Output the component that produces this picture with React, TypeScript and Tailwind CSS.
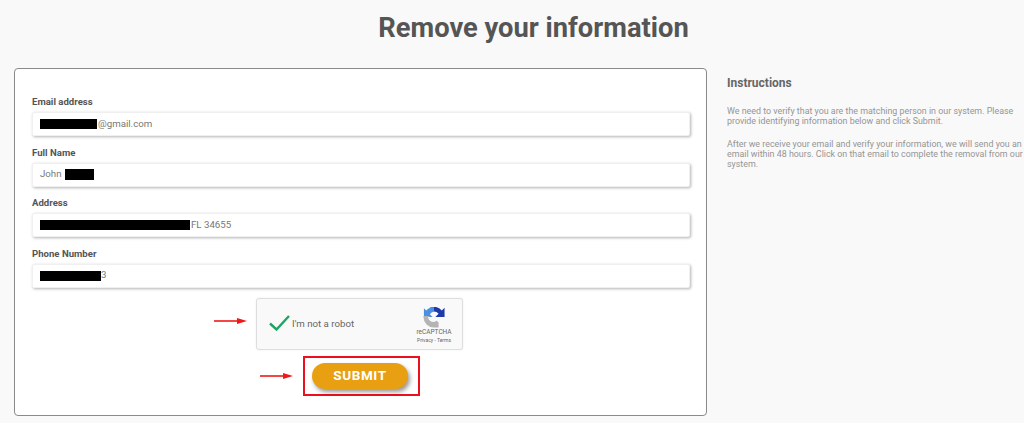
const font = { fontFamily: "Roboto, 'Liberation Sans', sans-serif" };

function Field({ label, children }: { label: string; children: React.ReactNode }) {
  return (
    <div className="flex flex-col h-[50.5px]">
      <label className="h-[20px] pt-[3px] text-[9.6px] leading-[14px] font-bold text-[#555]">{label}</label>
      <div className="h-[24px] flex items-center pl-[7px] bg-white rounded-[2px] border border-[#f0f0f0] shadow-[1px_1px_3px_rgba(0,0,0,0.3)] text-[9.7px] text-[#777]">
        {children}
      </div>
    </div>
  );
}

function Redact({ w }: { w: string }) {
  return <span className={`inline-block h-[10px] bg-black ${w}`}></span>;
}

function Arrow({ className }: { className: string }) {
  return (
    <svg className={className} width="34" height="8" viewBox="0 0 34 8">
      <path d="M0 4H24" stroke="#f01818" strokeWidth="1.6" />
      <path d="M23 1L33 4L23 7Z" fill="#f01818" />
    </svg>
  );
}

export default function App() {
  return (
    <div className="bg-white h-[440px] overflow-hidden" style={font}>
      <div className="h-[423px] bg-[#f9f9f9] relative overflow-hidden">
        <h1 className="text-[27.3px] leading-[32px] pt-[12px] pl-[43px] h-[68px] text-center font-bold text-[#555]">
          Remove your information
        </h1>
        <div className="flex">
          <div className="ml-[14px] w-[693px] h-[348px] shrink-0 bg-white border border-[#8a8a8a] rounded-[4px] pl-[17px] pr-[16px] pt-[23px]">
            <Field label="Email address">
              <Redact w="w-[57px]" />
              <span className="ml-[1px]">@gmail.com</span>
            </Field>
            <Field label="Full Name">
              <span>John</span>
              <span className="ml-[3px] inline-block h-[11px] w-[29px] bg-black"></span>
            </Field>
            <Field label="Address">
              <Redact w="w-[150px]" />
              <span className="ml-[1px]">FL 34655</span>
            </Field>
            <Field label="Phone Number">
              <Redact w="w-[61px]" />
              <span>3</span>
            </Field>
            <div className="flex flex-col items-center mt-[4px]">
              <div className="w-[207px] h-[52px] mr-[3px] bg-[#f9f9f9] border border-[#dedede] rounded-[3px] shadow-[0_0_2px_rgba(0,0,0,0.08)] flex items-center pl-[12px] pr-[8px]">
                <svg width="21" height="16" viewBox="0 0 21 16" className="mb-[3px]">
                  <path d="M1 8.500L7.500 14.500L20 1" fill="none" stroke="#1fa463" strokeWidth="2.400" />
                </svg>
                <span className="ml-[2px] mt-[1px] text-[9.7px] text-[#666]">I'm not a robot</span>
                <div className="ml-auto flex flex-col items-center w-[40px]">
                  <svg width="22" height="22" viewBox="0 0 24 24" className="mt-[2px]">
                    <path d="M7 2.200A11 11 0 0 1 20.500 5L23.500 2v10h-10l3.500-3.500A6.500 6.500 0 0 0 12 6Z" fill="#1c3aa9" />
                    <path d="M12 1A11 11 0 0 0 3.500 5L1 2.500V12h9.500L7.500 9A6.500 6.500 0 0 1 12 6Z" fill="#4a90e2" />
                    <path d="M0.500 12a11.500 11.500 0 0 0 11.500 11.500h5V18l-2-2-3 1.500a6.500 6.500 0 0 1-6.500-5.500l2.500-1H0.500Z" fill="#b4b4b4" />
                  </svg>
                  <span className="text-[6.500px] leading-[9px] text-[#666]">reCAPTCHA</span>
                  <span className="text-[5px] leading-[7px] text-[#666] whitespace-nowrap">Privacy - Terms</span>
                </div>
              </div>
              <div className="mt-[6px] w-[117px] h-[40px] border-2 border-[#ee0f1e] flex items-center justify-center">
                <button className="w-[96px] h-[26px] mb-[1px] mr-[2px] rounded-full bg-[#e89f12] text-white font-bold text-[13.500px] tracking-[0.6px] shadow-[2px_3px_4px_rgba(0,0,0,0.4)]">
                  SUBMIT
                </button>
              </div>
            </div>
          </div>
          <div className="ml-[20px] w-[297px] shrink-0 text-[8.900px] leading-[10.300px] text-[#959595]">
            <h2 className="text-[12px] leading-[16px] font-bold text-[#666] mt-[7px] mb-[15px]">Instructions</h2>
            <p className="mb-[12px]">We need to verify that you are the matching person in our system. Please provide identifying information below and click Submit.</p>
            <p>After we receive your email and verify your information, we will send you an email within 48 hours. Click on that email to complete the removal from our system.</p>
          </div>
        </div>
        <Arrow className="absolute left-[214px] top-[317px]" />
        <Arrow className="absolute left-[260px] top-[372px]" />
      </div>
    </div>
  );
}
